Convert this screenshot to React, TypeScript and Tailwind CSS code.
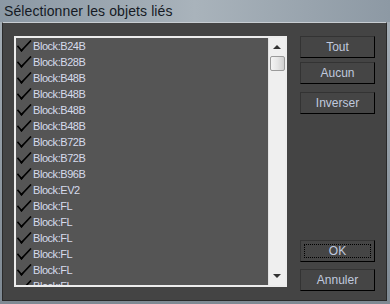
import React from 'react';

const items = [
  'Block:B24B',
  'Block:B28B',
  'Block:B48B',
  'Block:B48B',
  'Block:B48B',
  'Block:B48B',
  'Block:B72B',
  'Block:B72B',
  'Block:B96B',
  'Block:EV2',
  'Block:FL',
  'Block:FL',
  'Block:FL',
  'Block:FL',
  'Block:FL',
  'Block:FL',
];

const Check = () => (
  <svg width="15" height="12" viewBox="0 0 15 12" className="shrink-0">
    <path d="M1 6.5 L4.5 10.5 L13.5 1" fill="none" stroke="#000" strokeWidth="1.6" strokeLinecap="square" />
    <path d="M3.5 9.5 L4.5 11 L6 9" fill="none" stroke="#000" strokeWidth="1.4" />
  </svg>
);

const DlgButton = ({ label, focused, className = '' }: { label: string; focused?: boolean; className?: string }) => (
  <button
    className={`relative w-[75px] h-[22px] bg-[#454545] border border-t-[#333] border-l-[#333] border-r-black border-b-black text-[12px] text-[#c0c9de] leading-none ${className}`}
  >
    {focused && <span className="absolute inset-[3px] border border-dotted border-black" />}
    <span className="relative">{label}</span>
  </button>
);

export default function App() {
  return (
    <div
      className="w-[390px] h-[304px] flex flex-col bg-gradient-to-b from-[#a7b0b8] to-[#7e8993] overflow-hidden"
      style={{ fontFamily: '"Liberation Sans", Arial, sans-serif' }}
    >
      {/* title bar */}
      <div className="h-[22px] flex items-center px-[4px] bg-gradient-to-r from-[#8b98a4] via-[#a9b3bb] to-[#8d99a4]">
        <span className="text-[14px] text-[#151a24] tracking-[0.1px]">Sélectionner les objets liés</span>
      </div>

      {/* body */}
      <div className="flex-1 ml-[2px] mr-[3px] mb-[3px] border-t border-t-[#c8cdd2] border-l border-l-[#2a2a2a] border-r border-r-[#2a2a2a] border-b border-b-[#2a2a2a] bg-[#444444] flex pt-[13px] pl-[11px] pr-[10px]">
        {/* list box */}
        <div className="w-[273px] h-[251px] border-2 border-[#ededed] bg-[#555555] flex overflow-hidden">
          <div className="flex-1 overflow-hidden">
            {items.map((it, i) => (
              <div key={i} className="h-[16px] flex items-center pl-[1px] gap-[1px]">
                <Check />
                <span className="text-[11px] text-[#d6dbec] tracking-[-0.45px] leading-none">
                  {it}
                </span>
              </div>
            ))}
          </div>
          {/* scrollbar */}
          <div className="w-[17px] bg-[#efefef] flex flex-col items-center border-l border-[#e2e2e2]">
            <div className="h-[18px] flex items-center justify-center">
              <span className="w-0 h-0 border-l-[4px] border-r-[4px] border-b-[4px] border-l-transparent border-r-transparent border-b-[#333]" />
            </div>
            <div className="w-[15px] h-[15px] rounded-[2px] border border-[#9a9a9a] bg-gradient-to-r from-[#f4f4f4] via-[#e6e6e6] to-[#cfcfcf]" />
            <div className="flex-1" />
            <div className="h-[18px] flex items-center justify-center">
              <span className="w-0 h-0 border-l-[4px] border-r-[4px] border-t-[4px] border-l-transparent border-r-transparent border-t-[#333]" />
            </div>
          </div>
        </div>

        {/* buttons */}
        <div className="ml-[13px] flex flex-col">
          <DlgButton label="Tout" />
          <DlgButton label="Aucun" className="mt-[4px]" />
          <DlgButton label="Inverser" className="mt-[8px]" />
          <DlgButton label="OK" focused className="mt-[126px]" />
          <DlgButton label="Annuler" className="mt-[7px]" />
        </div>
      </div>
    </div>
  );
}
